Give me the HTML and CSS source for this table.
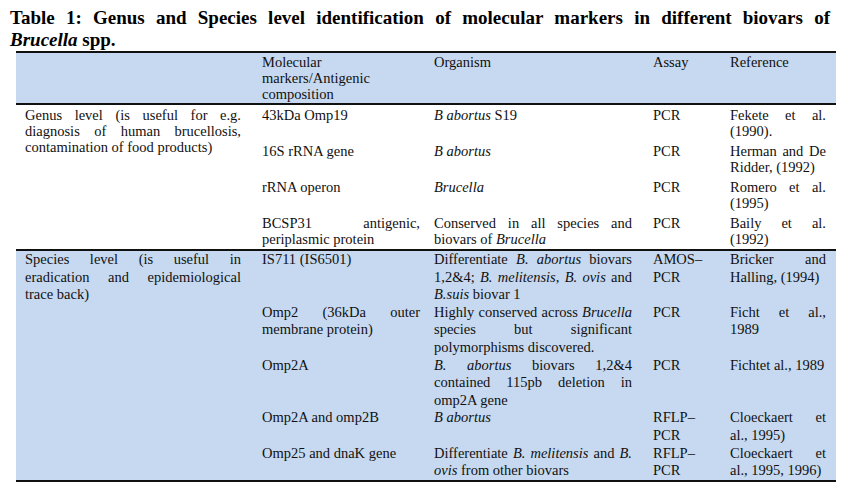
FILE: index.html
```html
<!DOCTYPE html>
<html lang="en">
<head>
<meta charset="utf-8">
<title>Table 1</title>
<link rel="stylesheet" href="styles.css">
</head>
<body>
<h1 class="title">
  <span class="ln j">Table 1: Genus and Species level identification of molecular markers in different biovars of</span>
  <span class="ln"><i>Brucella</i> spp.</span>
</h1>
<table class="markers">
  <colgroup>
    <col class="c1"><col class="c2"><col class="c3"><col class="c4"><col class="c5">
  </colgroup>
  <thead>
    <tr class="head">
      <td></td>
      <td><span class="ln">Molecular</span><span class="ln">markers/Antigenic</span><span class="ln">composition</span></td>
      <td>Organism</td>
      <td>Assay</td>
      <td>Reference</td>
    </tr>
  </thead>
  <tbody class="genus">
    <tr>
      <td rowspan="4"><span class="ln j">Genus level (is useful for e.g.</span><span class="ln j">diagnosis of human brucellosis,</span><span class="ln">contamination of food products)</span></td>
      <td>43kDa Omp19</td>
      <td><i>B abortus</i> S19</td>
      <td>PCR</td>
      <td><span class="ln j">Fekete et al.</span><span class="ln">(1990).</span></td>
    </tr>
    <tr>
      <td>16S rRNA gene</td>
      <td><i>B abortus</i></td>
      <td>PCR</td>
      <td><span class="ln j">Herman and De</span><span class="ln">Ridder, (1992)</span></td>
    </tr>
    <tr>
      <td>rRNA operon</td>
      <td><i>Brucella</i></td>
      <td>PCR</td>
      <td><span class="ln j">Romero et al.</span><span class="ln">(1995)</span></td>
    </tr>
    <tr>
      <td><span class="ln j">BCSP31 antigenic,</span><span class="ln">periplasmic protein</span></td>
      <td><span class="ln j">Conserved in all species and</span><span class="ln">biovars of <i>Brucella</i></span></td>
      <td>PCR</td>
      <td><span class="ln j">Baily et al.</span><span class="ln">(1992)</span></td>
    </tr>
  </tbody>
  <tbody class="species">
    <tr>
      <td rowspan="5"><span class="ln j">Species level (is useful in</span><span class="ln j">eradication and epidemiological</span><span class="ln">trace back)</span></td>
      <td>IS711 (IS6501)</td>
      <td><span class="ln j">Differentiate <i>B. abortus</i> biovars</span><span class="ln j">1,2&amp;4; <i>B. melitensis</i>, <i>B. ovis</i> and</span><span class="ln"><i>B.suis</i> biovar 1</span></td>
      <td><span class="ln">AMOS–</span><span class="ln">PCR</span></td>
      <td><span class="ln j">Bricker and</span><span class="ln">Halling, (1994)</span></td>
    </tr>
    <tr>
      <td><span class="ln j">Omp2 (36kDa outer</span><span class="ln">membrane protein)</span></td>
      <td><span class="ln j">Highly conserved across <i>Brucella</i></span><span class="ln j">species but significant</span><span class="ln">polymorphisms discovered.</span></td>
      <td>PCR</td>
      <td><span class="ln j">Ficht et al.,</span><span class="ln">1989</span></td>
    </tr>
    <tr>
      <td>Omp2A</td>
      <td><span class="ln j"><i>B. abortus</i> biovars 1,2&amp;4</span><span class="ln j">contained 115pb deletion in</span><span class="ln">omp2A gene</span></td>
      <td>PCR</td>
      <td>Fichtet al., 1989</td>
    </tr>
    <tr>
      <td>Omp2A and omp2B</td>
      <td><i>B abortus</i></td>
      <td><span class="ln">RFLP–</span><span class="ln">PCR</span></td>
      <td><span class="ln j">Cloeckaert et</span><span class="ln">al., 1995)</span></td>
    </tr>
    <tr>
      <td>Omp25 and dnaK gene</td>
      <td><span class="ln j">Differentiate <i>B. melitensis</i> and <i>B.</i></span><span class="ln"><i>ovis</i> from other biovars</span></td>
      <td><span class="ln">RFLP–</span><span class="ln">PCR</span></td>
      <td><span class="ln j">Cloeckaert et</span><span class="ln">al., 1995, 1996)</span></td>
    </tr>
  </tbody>
</table>
</body>
</html>
```

FILE: styles.css
```css
html, body {
  margin: 0;
  padding: 0;
  background: #ffffff;
}

body {
  font-family: "Liberation Serif", "Times New Roman", serif;
  color: #111111;
  width: 845px;
}

.ln {
  display: block;
  white-space: nowrap;
}

.ln.j {
  text-align: justify;
  text-align-last: justify;
}

.title {
  margin: 7px 0 0 10px;
  width: 820px;
  font-size: 19px;
  line-height: 22px;
  font-weight: bold;
  color: #000000;
}

.markers {
  margin-left: 16px;
  width: 820px;
  border-collapse: collapse;
  table-layout: fixed;
  font-size: 14.5px;
  border-top: 2px solid #111111;
  border-bottom: 2px solid #111111;
}

.c1 { width: 239px; }
.c2 { width: 173px; }
.c3 { width: 217px; }
.c4 { width: 78px; }
.c5 { width: 113px; }

.markers td {
  vertical-align: top;
  text-align: left;
  padding: 0;
}

.markers td:nth-child(1) { padding-left: 9px; padding-right: 14px; }

.markers tr td:nth-last-child(4) { padding-left: 7px; padding-right: 8px; }
.markers tr td:nth-last-child(3) { padding-left: 6px; padding-right: 13px; }
.markers tr td:nth-last-child(2) { padding-left: 8px; padding-right: 6px; }
.markers tr td:nth-last-child(1) { padding-left: 7px; padding-right: 10px; }

.head td {
  background: #c6d9f0;
  line-height: 16px;
  height: 48px;
  padding-top: 1px;
  padding-bottom: 1px;
  border-bottom: 2px solid #111111;
}

.genus td {
  line-height: 16px;
  padding-top: 2px;
  padding-bottom: 2px;
}

.genus tr:last-child td,
.genus td[rowspan] {
  border-bottom: 2px solid #111111;
}

.species td {
  background: #c6d9f0;
  line-height: 17.6px;
  padding-top: 0;
  padding-bottom: 0;
}
```
